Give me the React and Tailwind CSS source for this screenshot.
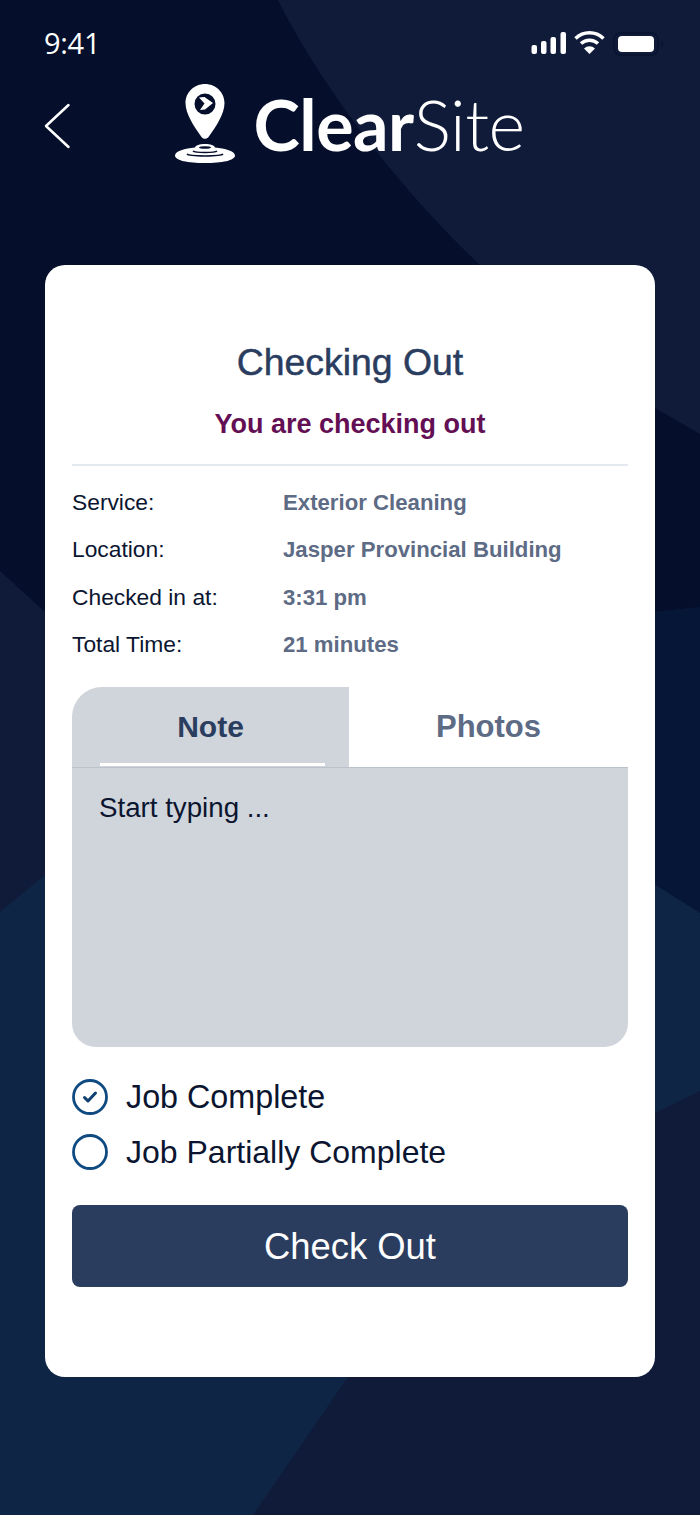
const details = [
  ["Service:", "Exterior Cleaning"],
  ["Location:", "Jasper Provincial Building"],
  ["Checked in at:", "3:31 pm"],
  ["Total Time:", "21 minutes"],
];

function Background() {
  return (
    <svg className="absolute inset-0 h-full w-full" viewBox="0 0 700 1515" fill="none">
      <path d="M0 0H278C315 75 390 180 480 265L655 408L700 434V607L655 612H45L0 571Z" fill="#050f2c" />
      <path d="M655 612L700 607V913L655 905Z" fill="#051637" />
      <path d="M0 912L45 875H640L700 913V1091L655 1113L348 1377L253 1515H0Z" fill="#0f2545" />
    </svg>
  );
}

function StatusBar() {
  return (
    <div className="flex h-[24px] items-center justify-between pl-[44px] pr-[38px] text-white">
      <span className="-mt-[2px] font-['Open_Sans',sans-serif] text-[29px] leading-none font-medium tracking-[-0.3px]">9:41</span>
      <svg width="132" height="24" viewBox="0 0 132 24" fill="white" className="overflow-visible">
        <rect x="1.500" y="14" width="5.500" height="9" rx="2" />
        <rect x="11" y="10" width="5.500" height="13" rx="2" />
        <rect x="20.500" y="6" width="5.500" height="17" rx="2" />
        <rect x="30.500" y="1" width="5.500" height="22" rx="2" />
        <path d="M59.500 23L54 17.500A8 8 0 0 1 65 17.500Z" />
        <path d="M51 12.500A12.500 12.500 0 0 1 68 12.500" fill="none" stroke="white" strokeWidth="3.500" />
        <path d="M45.500 7.500A20 20 0 0 1 73.500 7.500" fill="none" stroke="white" strokeWidth="3.500" />
        <rect x="84" y="2" width="44" height="22" rx="7" fill="none" stroke="#0a1430" strokeWidth="2" />
        <rect x="88" y="5" width="36" height="16" rx="4" />
        <rect x="131" y="10" width="2" height="6" rx="1" fill="#0a1430" />
      </svg>
    </div>
  );
}

function Logo() {
  return (
    <div className="flex items-center">
      <svg width="62" height="82" viewBox="0 0 62 82" fill="white">
        <path fillRule="evenodd" d="M30 1c10.800 0 19.500 8.500 19.500 19 0 10.500-8 23-16 34-1.700 2.400-5.300 2.400-7 0C18.500 43 10.500 30.500 10.500 20 10.500 9.500 19.200 1 30 1Zm0 9.500a10.500 10.500 0 1 0 0 21 10.500 10.500 0 0 0 0-21Z" />
        <path d="M24 14.500l5.500-0.500 8.500 6-8 6.500-5 0.500 4.500-6.500z" />
        <path fillRule="evenodd" d="M30 61c5.500 0 9.500 1.500 10 3.500 10 1 20 3.500 20 8 0 5-13 7.500-30 7.500S0 77.500 0 72.500c0-4.500 10-7 20-8 .500-2 4.500-3.500 10-3.500Z" />
        <path d="M12 71c2 2.500 34 2.500 36 0" stroke="#050f2c" strokeWidth="1.500" fill="none" />
        <path d="M18 68c2 2 22 2 24 0" stroke="#050f2c" strokeWidth="1.500" fill="none" />
        <ellipse cx="30" cy="64.500" rx="6" ry="1.300" fill="#050f2c" />
      </svg>
      <span className="ml-[16px] font-['Lato',sans-serif] text-[70px] leading-none font-bold tracking-[-0.5px] text-white">
        Clear<span className="font-light">Site</span>
      </span>
    </div>
  );
}

function Header() {
  return (
    <div className="relative mt-[27px] flex h-[84px] items-center justify-center">
      <svg className="absolute top-[21px] left-[44px]" width="27" height="46" viewBox="0 0 27 46" fill="none">
        <path d="M24.500 2L2 23l22.500 21" stroke="white" strokeWidth="2.500" strokeLinecap="round" strokeLinejoin="round" />
      </svg>
      <Logo />
    </div>
  );
}

function CheckCircle({ checked }) {
  return (
    <svg width="36" height="36" viewBox="0 0 36 36" fill="none">
      <circle cx="18" cy="18" r="16.500" stroke="#0f4a80" strokeWidth="2.800" />
      {checked && <path d="M12.500 18.500l3.500 3.500 7.500-8" stroke="#0f3f70" strokeWidth="3" strokeLinecap="round" strokeLinejoin="round" />}
    </svg>
  );
}

export default function App() {
  return (
    <div className="relative h-[1515px] w-[700px] overflow-hidden bg-[#0f1b38] font-['Liberation_Sans',sans-serif]">
      <Background />
      <div className="relative pt-[31px]">
        <StatusBar />
        <Header />

        <div className="mx-[45px] mt-[99px] h-[1112px] rounded-[20px] bg-white px-[27px] pt-[77px]">
          <h1 className="text-center text-[37.400px] leading-[40px] text-[#2a3d5f] [-webkit-text-stroke:0.5px_#2a3d5f]">Checking Out</h1>
          <p className="mt-[26px] text-center text-[27px] leading-[32px] font-bold text-[#640f54]">You are checking out</p>
          <div className="mt-[24px] border-t-2 border-[#e3e9ef]" />

          <div className="mt-[13px] flex flex-col">
            {details.map(([label, value]) => (
              <div key={label} className="flex h-[47.300px] items-center">
                <span className="-mt-[1px] w-[211px] text-[22.800px] text-[#0b1530]">{label}</span>
                <span className="text-[22.200px] font-bold text-[#5d6b85]">{value}</span>
              </div>
            ))}
          </div>

          <div className="mt-[19px] flex h-[80px]">
            <div className="relative flex w-[277px] items-center justify-center rounded-tl-[30px] bg-[#d0d4db] pb-[1px] text-[30px] font-bold text-[#2a3d5f]">
              Note
              <div className="absolute bottom-[1px] left-[28px] h-[3px] w-[225px] bg-white" />
            </div>
            <div className="flex flex-1 items-center justify-center pt-[1px] text-[31px] font-bold text-[#5d6b85]">Photos</div>
          </div>
          <div className="h-[280px] rounded-b-[24px] border-t border-[#bcc2cb] bg-[#d0d4db] px-[27px] pt-[22px] text-[27.700px] leading-[36px] text-[#0b1530]">
            Start typing ...
          </div>

          <div className="mt-[32px] flex flex-col gap-[19px]">
            <div className="flex items-center gap-[18px] text-[32.300px] leading-[36px] text-[#0b1530]">
              <CheckCircle checked />
              Job Complete
            </div>
            <div className="flex items-center gap-[18px] text-[32px] leading-[36px] text-[#0b1530]">
              <CheckCircle />
              Job Partially Complete
            </div>
          </div>

          <button className="mt-[35px] flex h-[82px] w-full items-center justify-center rounded-[8px] bg-[#2a3d5f] pt-[3px] text-[36.400px] text-white">
            Check Out
          </button>
        </div>
      </div>
    </div>
  );
}
